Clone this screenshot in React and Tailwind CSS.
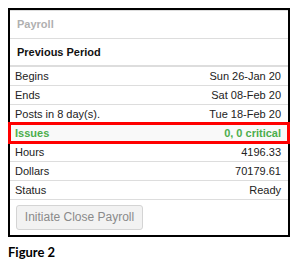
import React from "react";

const rows = [
  { label: "Begins", value: "Sun 26-Jan 20" },
  { label: "Ends", value: "Sat 08-Feb 20" },
  { label: "Posts in 8 day(s).", value: "Tue 18-Feb 20" },
  { label: "Issues", value: "0, 0 critical", issue: true },
  { label: "Hours", value: "4196.33" },
  { label: "Dollars", value: "70179.61" },
  { label: "Status", value: "Ready" },
];

export default function App() {
  return (
    <div className="relative h-[266px] w-[302px] overflow-hidden bg-white pt-[8px] font-['Liberation_Sans',Arial,sans-serif]">
      <div className="ml-[8px] h-[229px] w-[282px] border-2 border-black">
        <div className="flex h-[29px] items-center border-y border-[#dddddd] pl-[7px] text-[11px] font-bold text-[#b0b0b0]">
          Payroll
        </div>
        <div className="flex h-[28px] items-center border-b-2 border-[#dddddd] pl-[7px] text-[11px] font-bold text-[#111]">
          Previous Period
        </div>
        {rows.map((r) => (
          <div
            key={r.label}
            className={
              r.issue
                ? "relative flex h-[19px] items-center justify-between border-b border-[#dddddd] bg-[#f9f9f9] pl-[5px] pr-[7px] text-[11px] font-bold text-[#4cae4c]"
                : "relative flex h-[19px] items-center justify-between border-b border-[#dddddd] pl-[5px] pr-[7px] text-[11px] text-[#222]"
            }
          >
            <span>{r.label}</span>
            <span>{r.value}</span>
            {r.issue && (
              <div className="pointer-events-none absolute -left-[2px] -right-[2px] -top-[2px] -bottom-[2px] border-[3px] border-[#ff0000]" />
            )}
          </div>
        ))}
        <div className="pl-[6px] pt-[4px]">
          <button className="h-[25px] w-[127px] rounded-[3px] border border-[#d4d4d4] bg-[#f2f2f2] text-[12px] text-[#8a8a8a]">
            Initiate Close Payroll
          </button>
        </div>
      </div>
      <div className="ml-[8px] mt-[7px] font-['Lato','Open_Sans',sans-serif] text-[13px] font-bold leading-[16px] text-black">
        Figure 2
      </div>
    </div>
  );
}
